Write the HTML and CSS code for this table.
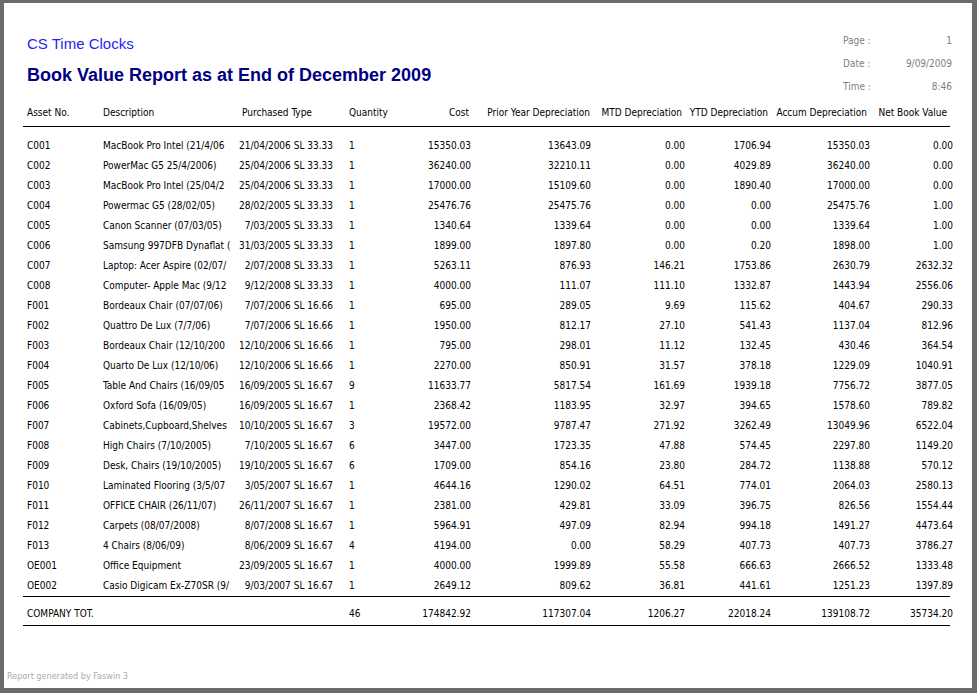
FILE: index.html
```html
<!DOCTYPE html>
<html>
<head>
<meta charset="utf-8">
<title>Book Value Report</title>
<link rel="stylesheet" href="styles.css">
</head>
<body>
<div class="page">
  <header class="report-head">
    <div class="titles">
      <div class="company">CS Time Clocks</div>
      <h1 class="title">Book Value Report as at End of December 2009</h1>
    </div>
    <div class="meta">
      <div class="meta-row"><span>Page :</span><span>1</span></div>
      <div class="meta-row"><span>Date :</span><span>9/09/2009</span></div>
      <div class="meta-row"><span>Time :</span><span>8:46</span></div>
    </div>
  </header>

  <div class="report">
    <div class="row head">
      <div>Asset No.</div><div>Description</div><div class="ptype">Purchased Type</div><div class="qty">Quantity</div>
      <div class="num">Cost</div><div class="num">Prior Year Depreciation</div><div class="num">MTD Depreciation</div><div class="num">YTD Depreciation</div><div class="num">Accum Depreciation</div><div class="num">Net Book Value</div>
    </div>
    <div class="body">
      <div class="row"><div>C001</div><div class="desc">MacBook Pro Intel (21/4/06</div><div class="ptype">21/04/2006 SL 33.33</div><div class="qty">1</div><div class="num">15350.03</div><div class="num">13643.09</div><div class="num">0.00</div><div class="num">1706.94</div><div class="num">15350.03</div><div class="num">0.00</div></div>
      <div class="row"><div>C002</div><div class="desc">PowerMac G5 25/4/2006)</div><div class="ptype">25/04/2006 SL 33.33</div><div class="qty">1</div><div class="num">36240.00</div><div class="num">32210.11</div><div class="num">0.00</div><div class="num">4029.89</div><div class="num">36240.00</div><div class="num">0.00</div></div>
      <div class="row"><div>C003</div><div class="desc">MacBook Pro Intel (25/04/2</div><div class="ptype">25/04/2006 SL 33.33</div><div class="qty">1</div><div class="num">17000.00</div><div class="num">15109.60</div><div class="num">0.00</div><div class="num">1890.40</div><div class="num">17000.00</div><div class="num">0.00</div></div>
      <div class="row"><div>C004</div><div class="desc">Powermac G5 (28/02/05)</div><div class="ptype">28/02/2005 SL 33.33</div><div class="qty">1</div><div class="num">25476.76</div><div class="num">25475.76</div><div class="num">0.00</div><div class="num">0.00</div><div class="num">25475.76</div><div class="num">1.00</div></div>
      <div class="row"><div>C005</div><div class="desc">Canon Scanner (07/03/05)</div><div class="ptype">7/03/2005 SL 33.33</div><div class="qty">1</div><div class="num">1340.64</div><div class="num">1339.64</div><div class="num">0.00</div><div class="num">0.00</div><div class="num">1339.64</div><div class="num">1.00</div></div>
      <div class="row"><div>C006</div><div class="desc">Samsung 997DFB Dynaflat (</div><div class="ptype">31/03/2005 SL 33.33</div><div class="qty">1</div><div class="num">1899.00</div><div class="num">1897.80</div><div class="num">0.00</div><div class="num">0.20</div><div class="num">1898.00</div><div class="num">1.00</div></div>
      <div class="row"><div>C007</div><div class="desc">Laptop: Acer Aspire (02/07/</div><div class="ptype">2/07/2008 SL 33.33</div><div class="qty">1</div><div class="num">5263.11</div><div class="num">876.93</div><div class="num">146.21</div><div class="num">1753.86</div><div class="num">2630.79</div><div class="num">2632.32</div></div>
      <div class="row"><div>C008</div><div class="desc">Computer- Apple Mac (9/12</div><div class="ptype">9/12/2008 SL 33.33</div><div class="qty">1</div><div class="num">4000.00</div><div class="num">111.07</div><div class="num">111.10</div><div class="num">1332.87</div><div class="num">1443.94</div><div class="num">2556.06</div></div>
      <div class="row"><div>F001</div><div class="desc">Bordeaux Chair (07/07/06)</div><div class="ptype">7/07/2006 SL 16.66</div><div class="qty">1</div><div class="num">695.00</div><div class="num">289.05</div><div class="num">9.69</div><div class="num">115.62</div><div class="num">404.67</div><div class="num">290.33</div></div>
      <div class="row"><div>F002</div><div class="desc">Quattro De Lux (7/7/06)</div><div class="ptype">7/07/2006 SL 16.66</div><div class="qty">1</div><div class="num">1950.00</div><div class="num">812.17</div><div class="num">27.10</div><div class="num">541.43</div><div class="num">1137.04</div><div class="num">812.96</div></div>
      <div class="row"><div>F003</div><div class="desc">Bordeaux Chair (12/10/200</div><div class="ptype">12/10/2006 SL 16.66</div><div class="qty">1</div><div class="num">795.00</div><div class="num">298.01</div><div class="num">11.12</div><div class="num">132.45</div><div class="num">430.46</div><div class="num">364.54</div></div>
      <div class="row"><div>F004</div><div class="desc">Quarto De Lux (12/10/06)</div><div class="ptype">12/10/2006 SL 16.66</div><div class="qty">1</div><div class="num">2270.00</div><div class="num">850.91</div><div class="num">31.57</div><div class="num">378.18</div><div class="num">1229.09</div><div class="num">1040.91</div></div>
      <div class="row"><div>F005</div><div class="desc">Table And Chairs (16/09/05</div><div class="ptype">16/09/2005 SL 16.67</div><div class="qty">9</div><div class="num">11633.77</div><div class="num">5817.54</div><div class="num">161.69</div><div class="num">1939.18</div><div class="num">7756.72</div><div class="num">3877.05</div></div>
      <div class="row"><div>F006</div><div class="desc">Oxford Sofa (16/09/05)</div><div class="ptype">16/09/2005 SL 16.67</div><div class="qty">1</div><div class="num">2368.42</div><div class="num">1183.95</div><div class="num">32.97</div><div class="num">394.65</div><div class="num">1578.60</div><div class="num">789.82</div></div>
      <div class="row"><div>F007</div><div class="desc">Cabinets,Cupboard,Shelves</div><div class="ptype">10/10/2005 SL 16.67</div><div class="qty">3</div><div class="num">19572.00</div><div class="num">9787.47</div><div class="num">271.92</div><div class="num">3262.49</div><div class="num">13049.96</div><div class="num">6522.04</div></div>
      <div class="row"><div>F008</div><div class="desc">High Chairs (7/10/2005)</div><div class="ptype">7/10/2005 SL 16.67</div><div class="qty">6</div><div class="num">3447.00</div><div class="num">1723.35</div><div class="num">47.88</div><div class="num">574.45</div><div class="num">2297.80</div><div class="num">1149.20</div></div>
      <div class="row"><div>F009</div><div class="desc">Desk, Chairs (19/10/2005)</div><div class="ptype">19/10/2005 SL 16.67</div><div class="qty">6</div><div class="num">1709.00</div><div class="num">854.16</div><div class="num">23.80</div><div class="num">284.72</div><div class="num">1138.88</div><div class="num">570.12</div></div>
      <div class="row"><div>F010</div><div class="desc">Laminated Flooring (3/5/07</div><div class="ptype">3/05/2007 SL 16.67</div><div class="qty">1</div><div class="num">4644.16</div><div class="num">1290.02</div><div class="num">64.51</div><div class="num">774.01</div><div class="num">2064.03</div><div class="num">2580.13</div></div>
      <div class="row"><div>F011</div><div class="desc">OFFICE CHAIR (26/11/07)</div><div class="ptype">26/11/2007 SL 16.67</div><div class="qty">1</div><div class="num">2381.00</div><div class="num">429.81</div><div class="num">33.09</div><div class="num">396.75</div><div class="num">826.56</div><div class="num">1554.44</div></div>
      <div class="row"><div>F012</div><div class="desc">Carpets (08/07/2008)</div><div class="ptype">8/07/2008 SL 16.67</div><div class="qty">1</div><div class="num">5964.91</div><div class="num">497.09</div><div class="num">82.94</div><div class="num">994.18</div><div class="num">1491.27</div><div class="num">4473.64</div></div>
      <div class="row"><div>F013</div><div class="desc">4 Chairs (8/06/09)</div><div class="ptype">8/06/2009 SL 16.67</div><div class="qty">4</div><div class="num">4194.00</div><div class="num">0.00</div><div class="num">58.29</div><div class="num">407.73</div><div class="num">407.73</div><div class="num">3786.27</div></div>
      <div class="row"><div>OE001</div><div class="desc">Office Equipment</div><div class="ptype">23/09/2005 SL 16.67</div><div class="qty">1</div><div class="num">4000.00</div><div class="num">1999.89</div><div class="num">55.58</div><div class="num">666.63</div><div class="num">2666.52</div><div class="num">1333.48</div></div>
      <div class="row"><div>OE002</div><div class="desc">Casio Digicam Ex-Z70SR (9/</div><div class="ptype">9/03/2007 SL 16.67</div><div class="qty">1</div><div class="num">2649.12</div><div class="num">809.62</div><div class="num">36.81</div><div class="num">441.61</div><div class="num">1251.23</div><div class="num">1397.89</div></div>
    </div>
    <div class="row total">
      <div class="total-label">COMPANY TOT.</div><div class="qty">46</div>
      <div class="num">174842.92</div><div class="num">117307.04</div><div class="num">1206.27</div><div class="num">22018.24</div><div class="num">139108.72</div><div class="num">35734.20</div>
    </div>
  </div>

  <footer class="generated">Report generated by Faswin 3</footer>
</div>
</body>
</html>
```

FILE: styles.css
```css
* { box-sizing: border-box; }

html, body {
  margin: 0;
  padding: 0;
}

body {
  background: #6b6b6b;
  font-family: "DejaVu Sans Condensed", "DejaVu Sans", sans-serif;
  font-size: 10px;
  color: #000;
}

.page {
  margin: 3px 5px 0 4px;
  height: 685px;
  background: #fff;
  display: flex;
  flex-direction: column;
}

.report-head {
  display: flex;
  justify-content: space-between;
  align-items: flex-start;
  padding: 26px 20px 0 23px;
}

.company {
  margin-top: 6px;
  font-family: "Liberation Sans", sans-serif;
  font-size: 15px;
  line-height: 18px;
  color: #1f1ff0;
}

.title {
  margin: 11px 0 0 0;
  font-family: "Liberation Sans", sans-serif;
  font-weight: bold;
  font-size: 18px;
  line-height: 22px;
  color: #000080;
}

.meta {
  width: 109px;
  color: #808080;
}

.meta-row {
  display: flex;
  justify-content: space-between;
  height: 23px;
  line-height: 23px;
}

.report {
  margin: 5px 0 0 19px;
  width: 927px;
}

.row {
  display: grid;
  grid-template-columns: 76px 130px 100px 77px 61px 120px 94px 86px 99px 83px;
  padding-left: 4px;
  height: 20px;
  line-height: 20px;
  white-space: nowrap;
}

.row > div {
  overflow: hidden;
}

.head {
  height: 24px;
  padding-bottom: 3px;
  border-bottom: 1px solid #000;
}

.head .ptype {
  text-align: left;
  padding-left: 9px;
}

.head .num:nth-child(5) { padding-right: 2px; }
.head .num:nth-child(6) { padding-right: 1px; }
.head .num:nth-child(7) { padding-right: 3px; }
.head .num:nth-child(8) { padding-right: 3px; }
.head .num:nth-child(9) { padding-right: 3px; }
.head .num:nth-child(10) { padding-right: 6px; overflow: visible; }

.body {
  padding: 9px 0 0 0;
  border-bottom: 1px solid #000;
}

.desc {
  text-overflow: clip;
  padding-right: 3px;
}

.ptype {
  text-align: right;
}

.qty {
  padding-left: 16px;
}

.num {
  text-align: right;
}

.total {
  height: 29px;
  padding-top: 7px;
  padding-bottom: 2px;
  border-bottom: 1px solid #000;
}

.total-label {
  grid-column: 1 / 4;
}

.generated {
  margin-top: auto;
  padding: 0 0 6px 3px;
  font-size: 9px;
  line-height: 12px;
  color: #aaaaaa;
}
```
